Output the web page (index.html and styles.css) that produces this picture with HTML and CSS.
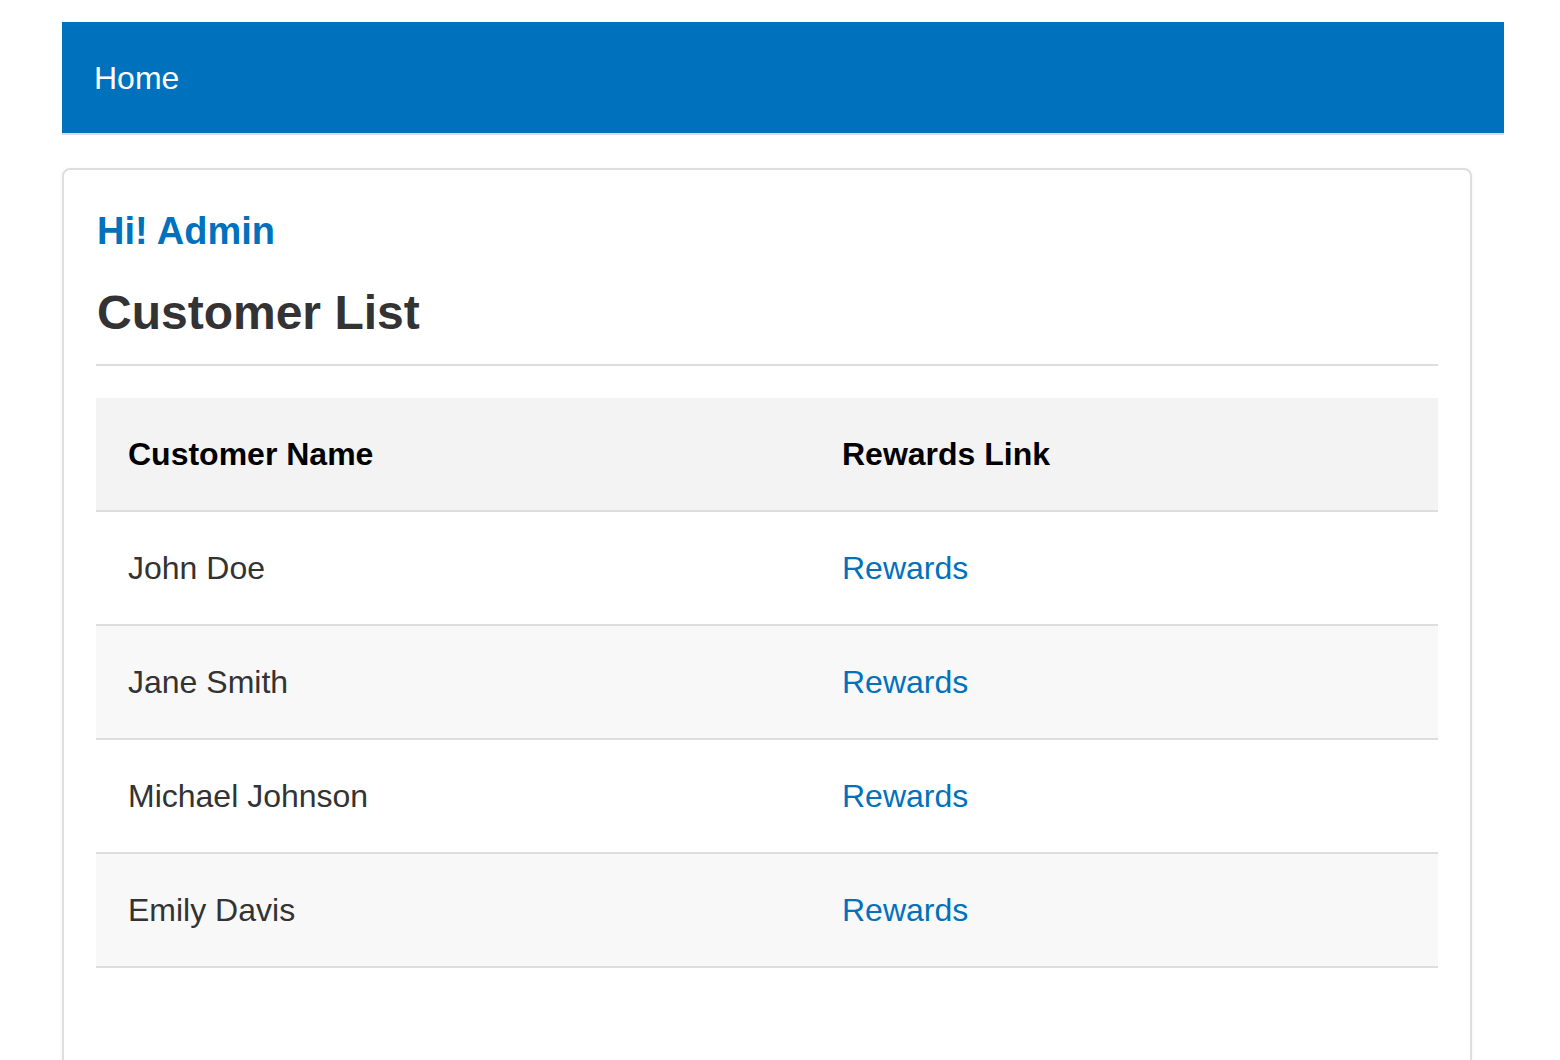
FILE: index.html
```html
<!DOCTYPE html>
<html lang="en">
<head>
<meta charset="utf-8">
<title>Customer List</title>
<link rel="stylesheet" href="styles.css">
</head>
<body>
<div class="page">
  <nav class="navbar">
    <a class="nav-link" href="#">Home</a>
  </nav>
  <div class="card">
    <h3 class="greeting">Hi! Admin</h3>
    <h2 class="title">Customer List</h2>
    <hr class="divider">
    <table class="customers">
      <thead>
        <tr><th class="col-name">Customer Name</th><th>Rewards Link</th></tr>
      </thead>
      <tbody>
        <tr><td>John Doe</td><td><a href="#">Rewards</a></td></tr>
        <tr><td>Jane Smith</td><td><a href="#">Rewards</a></td></tr>
        <tr><td>Michael Johnson</td><td><a href="#">Rewards</a></td></tr>
        <tr><td>Emily Davis</td><td><a href="#">Rewards</a></td></tr>
      </tbody>
    </table>
  </div>
</div>
</body>
</html>
```
FILE: styles.css
```css
html, body {
  margin: 0;
  background: #fff;
  font-family: "Liberation Sans", Arial, sans-serif;
  color: #333;
}
.page {
  padding: 22px 56px 0 62px;
}
.navbar {
  background: #0071bc;
  height: 111px;
  border-bottom: 2px solid #dcdcdc;
  display: flex;
  align-items: center;
  padding-left: 32px;
  padding-top: 2px;
  box-sizing: border-box;
  height: 113px;
}
.nav-link {
  color: #fff;
  font-size: 32px;
  text-decoration: none;
}
.card {
  margin-top: 33px;
  margin-right: 32px;
  border: 2px solid #dedede;
  border-radius: 8px;
  box-shadow: 0 1px 4px rgba(0,0,0,0.06);
  padding: 39px 32px 120px 33px;
}
.greeting {
  margin: 0;
  color: #0071bc;
  font-size: 38px;
  font-weight: bold;
  line-height: 1.2;
}
.title {
  margin: 29px 0 0 0;
  color: #333;
  font-size: 48px;
  font-weight: bold;
  line-height: 1.2;
}
.divider {
  margin: 23px 0 0 -1px;
  border: 0;
  border-top: 2px solid #dddddd;
  height: 0;
}
.customers {
  margin-top: 32px;
  margin-left: -1px;
  width: calc(100% + 1px);
  border-collapse: collapse;
  font-size: 32px;
  line-height: 48px;
}
.customers th {
  text-align: left;
  font-weight: bold;
  color: #000;
  background: #f3f3f3;
  padding: 32px 32px;
  border-bottom: 2px solid #dddddd;
}
.customers th.col-name {
  width: 650px;
}
.customers td {
  padding: 32px 32px;
  border-bottom: 2px solid #dddddd;
  color: #333;
}
.customers tbody tr:nth-child(even) td {
  background: #f8f8f8;
}
.customers a {
  color: #0071bc;
  text-decoration: none;
}
```
